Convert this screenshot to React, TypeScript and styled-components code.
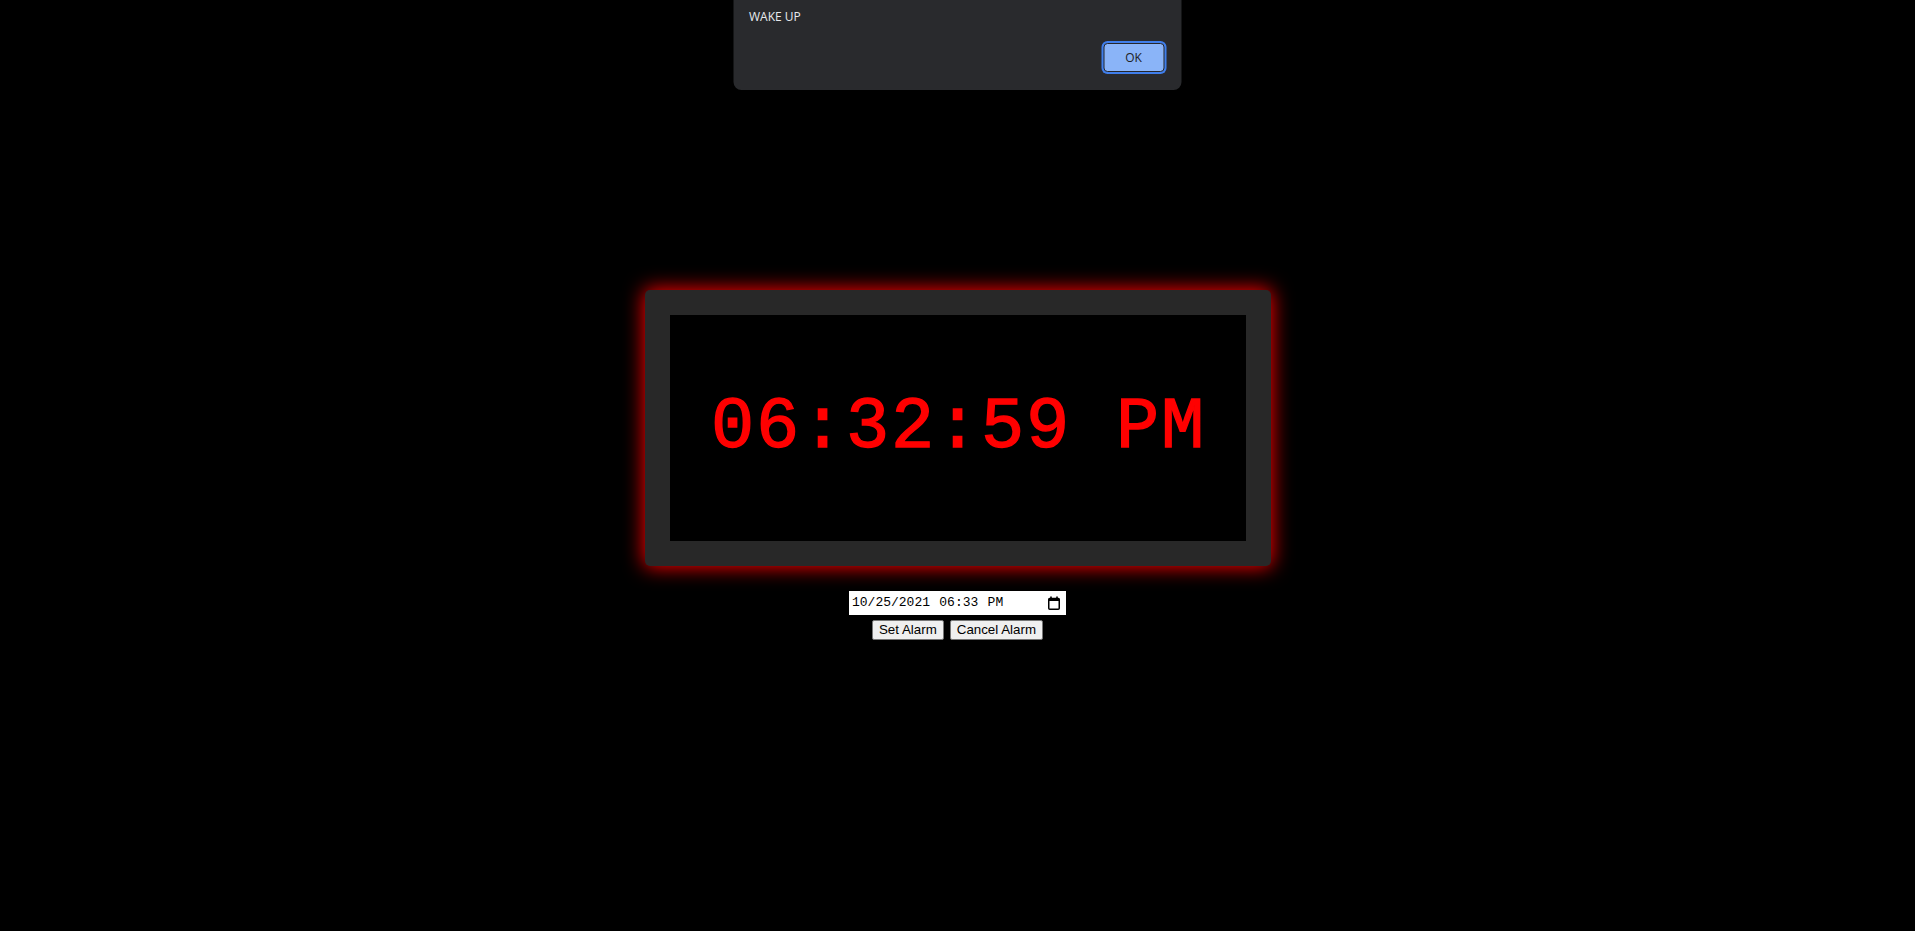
import React from "react";
import styled, { createGlobalStyle } from "styled-components";

const GlobalStyle = createGlobalStyle`
  html, body {
    margin: 0;
    padding: 0;
    background: #000;
    font-family: "Liberation Sans", Arial, sans-serif;
  }
`;

const Page = styled.main`
  min-height: 100vh;
  box-sizing: border-box;
  padding-bottom: 2px;
  display: flex;
  flex-direction: column;
  align-items: center;
  justify-content: center;
  background: #000;
`;

const ClockFrame = styled.section`
  box-sizing: border-box;
  width: 626px;
  height: 276px;
  padding: 25px;
  background: #282828;
  border-radius: 5px;
  box-shadow: 0 0 20px 1px #ff0000;
`;

const ClockFace = styled.div`
  height: 100%;
  background: #000;
  display: flex;
  align-items: center;
  justify-content: center;
  box-sizing: border-box;
  padding-left: 2px;
`;

const TimeText = styled.span`
  font-family: "Courier New", "Liberation Mono", monospace;
  font-weight: normal;
  font-size: 72px;
  letter-spacing: 1.8px;
  color: #ff0000;
  -webkit-text-stroke: 1.4px #ff0000;
  white-space: pre;
`;

const Controls = styled.div`
  margin-top: 25px;
  display: flex;
  flex-direction: column;
  align-items: center;
  gap: 5px;
`;

const DateField = styled.div`
  box-sizing: border-box;
  width: 217px;
  height: 24px;
  background: #fff;
  padding: 0 6px 0 3px;
  display: flex;
  align-items: center;
  justify-content: space-between;
  font-family: "Liberation Mono", "Courier New", monospace;
  font-size: 13px;
  color: #000;
`;

const DateText = styled.span`
  white-space: pre;
  word-spacing: 1.5px;
`;

const ButtonRow = styled.div`
  display: flex;
  gap: 6px;
`;

const NativeButton = styled.button`
  box-sizing: border-box;
  height: 20px;
  padding: 0 6px;
  font-family: "Liberation Sans", Arial, sans-serif;
  font-size: 13.333px;
  color: #000;
  background: #efefef;
  border: 1px solid #767676;
  border-radius: 2px;
  cursor: default;
`;

const AlertDialog = styled.div`
  position: fixed;
  top: 0;
  left: 50%;
  transform: translateX(calc(-50% - 0.5px));
  box-sizing: border-box;
  width: 448px;
  height: 90px;
  padding: 8px 15px 16px 16px;
  background: #292a2d;
  border-radius: 0 0 8px 8px;
  display: flex;
  flex-direction: column;
  justify-content: space-between;
  font-family: "Segoe UI", "Open Sans", "Noto Sans", sans-serif;
`;

const AlertMessage = styled.div`
  font-size: 12px;
  color: #e8eaed;
`;

const AlertActions = styled.div`
  display: flex;
  justify-content: flex-end;
`;

const OkButton = styled.button`
  box-sizing: border-box;
  width: 61px;
  height: 29px;
  margin: 2px;
  background: #8ab4f8;
  border: 1px solid #25262a;
  border-radius: 4px;
  box-shadow: 0 0 0 2px #3f7eeb;
  color: #202124;
  font-family: "Segoe UI", "Open Sans", "Noto Sans", sans-serif;
  font-size: 12px;
  padding: 0;
`;

const CalendarIcon = () => (
  <svg width="12" height="14" viewBox="0 0 12 14" aria-hidden="true">
    <rect x="2.2" y="0.5" width="1.6" height="3" fill="#000" />
    <rect x="8.2" y="0.5" width="1.6" height="3" fill="#000" />
    <rect x="0.75" y="2.5" width="10.5" height="10.75" rx="1" fill="none" stroke="#000" strokeWidth="1.5" />
    <rect x="0.75" y="2.5" width="10.5" height="2.5" fill="#000" />
  </svg>
);

export default function App() {
  return (
    <>
      <GlobalStyle />
      <Page>
        <ClockFrame>
          <ClockFace>
            <TimeText>06:32:59 PM</TimeText>
          </ClockFace>
        </ClockFrame>
        <Controls>
          <DateField>
            <DateText>10/25/2021 06:33 PM</DateText>
            <CalendarIcon />
          </DateField>
          <ButtonRow>
            <NativeButton>Set Alarm</NativeButton>
            <NativeButton>Cancel Alarm</NativeButton>
          </ButtonRow>
        </Controls>
      </Page>
      <AlertDialog role="alertdialog">
        <AlertMessage>WAKE UP</AlertMessage>
        <AlertActions>
          <OkButton>OK</OkButton>
        </AlertActions>
      </AlertDialog>
    </>
  );
}
